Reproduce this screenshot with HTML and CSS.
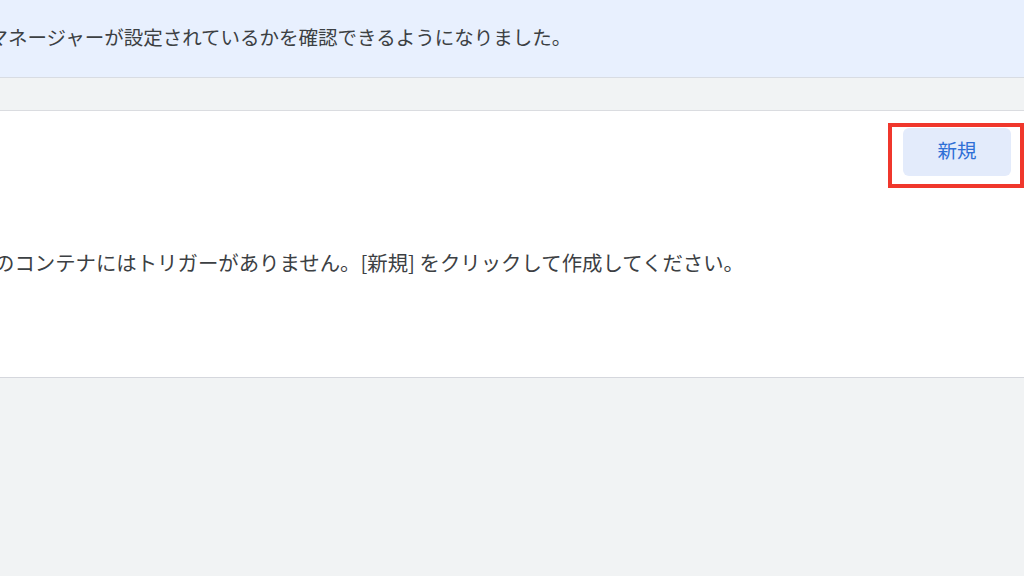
FILE: index.html
```html
<!DOCTYPE html>
<html lang="ja">
<head>
<meta charset="utf-8">
<link rel="stylesheet" href="styles.css">
</head>
<body>
<div class="banner">
  <p class="banner-text">マネージャーが設定されているかを確認できるようになりました。</p>
</div>
<div class="gap"></div>
<section class="card">
  <div class="card-head">
    <div class="highlight">
      <button class="btn-new">新規</button>
    </div>
  </div>
  <p class="empty">このコンテナにはトリガーがありません。[新規] をクリックして作成してください。</p>
</section>
</body>
</html>
```
FILE: styles.css
```css
html, body {
  margin: 0;
  padding: 0;
}
body {
  width: 1024px;
  height: 576px;
  overflow: hidden;
  background: #f1f3f4;
  font-family: "Noto Sans CJK JP", "Noto Sans", sans-serif;
  color: #3c4043;
}
.banner {
  height: 77px;
  background: #e8f0fe;
  border-bottom: 1px solid #d8dce3;
  display: flex;
  align-items: center;
  overflow: hidden;
}
.banner-text {
  margin: -4px 0 0 -11.5px;
  font-size: 19.5px;
  white-space: nowrap;
  line-height: 1;
}
.gap {
  height: 32px;
  border-bottom: 1px solid #dadce0;
}
.card {
  background: #fff;
  height: 267px;
  border-bottom: 1px solid #d5d7dd;
  box-sizing: border-box;
  overflow: hidden;
}
.card-head {
  display: flex;
  justify-content: flex-end;
  padding-top: 12px;
}
.highlight {
  border: 4px solid #f0372c;
  padding: 1px 9px 8px 11px;
}
.btn-new {
  display: block;
  width: 108px;
  height: 48px;
  border: none;
  border-radius: 6px;
  background: #e3ebfb;
  color: #2f6fd6;
  font-family: "Noto Sans CJK JP", "Noto Sans", sans-serif;
  font-size: 19.5px;
  line-height: 1;
  padding: 0 0 4px;
}
.empty {
  margin: 64px 0 0 -26.4px;
  font-size: 20.4px;
  line-height: 1;
  white-space: nowrap;
}
```
